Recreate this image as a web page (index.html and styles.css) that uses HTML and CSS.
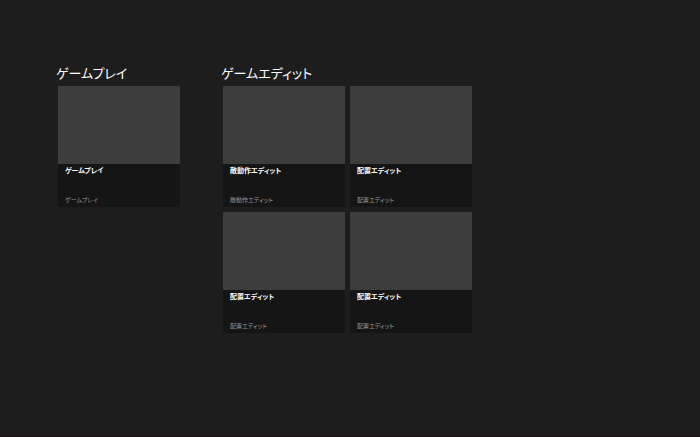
FILE: index.html
```html
<!DOCTYPE html>
<html lang="ja">
<head>
<meta charset="utf-8">
<title>ゲーム</title>
<link rel="stylesheet" href="styles.css">
</head>
<body>
<main class="hub">
  <section class="group">
    <h2 class="group-title">ゲームプレイ</h2>
    <div class="tiles">
      <article class="tile"><div class="tile-image"></div><div class="tile-text"><h3 class="tile-title">ゲームプレイ</h3><p class="tile-subtitle">ゲームプレイ</p></div></article>
    </div>
  </section>
  <section class="group">
    <h2 class="group-title">ゲームエディット</h2>
    <div class="tiles tiles-double">
      <article class="tile"><div class="tile-image"></div><div class="tile-text"><h3 class="tile-title">敵動作エディット</h3><p class="tile-subtitle">敵動作エディット</p></div></article>
      <article class="tile"><div class="tile-image"></div><div class="tile-text"><h3 class="tile-title">配置エディット</h3><p class="tile-subtitle">配置エディット</p></div></article>
      <article class="tile"><div class="tile-image"></div><div class="tile-text"><h3 class="tile-title">配置エディット</h3><p class="tile-subtitle">配置エディット</p></div></article>
      <article class="tile"><div class="tile-image"></div><div class="tile-text"><h3 class="tile-title">配置エディット</h3><p class="tile-subtitle">配置エディット</p></div></article>
    </div>
  </section>
</main>
</body>
</html>
```
FILE: styles.css
```css
* { box-sizing: border-box; }
body {
  margin: 0;
  min-height: 100vh;
  background: #1d1d1d;
  border-bottom: 1px solid #1c1016;
  color: #fff;
  font-family: "Noto Sans CJK JP", sans-serif;
  font-feature-settings: "palt";
}
h2, h3, p { margin: 0; }
.hub { display: flex; align-items: flex-start; gap: 39px; padding: 63px 56px; }
.group-title { font-size: 13px; line-height: 20px; font-weight: 400; margin-bottom: 3px; white-space: nowrap; }
.tiles { display: grid; grid-template-columns: 122px; gap: 5px; padding: 0 2px; }
.tiles-double { grid-template-columns: 122px 122px; }
.tile { background: #151515; }
.tile-image { height: 78px; background: #3d3d3d; }
.tile-text { padding: 0 7px 1px; }
.tile-title { font-size: 7px; line-height: 13px; font-weight: 700; margin-bottom: 17px; }
.tile-subtitle { font-size: 6px; line-height: 12px; color: #999; }
```
